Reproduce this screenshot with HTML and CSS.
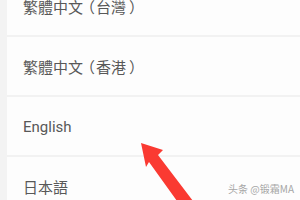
FILE: index.html
```html
<!DOCTYPE html>
<html>
<head>
<meta charset="utf-8">
<link rel="stylesheet" href="styles.css">
</head>
<body>
<div class="screen">
  <div class="strip"></div>
  <div class="list">
    <div class="row">繁體中文<span class="op">（</span>台灣<span class="cp">）</span></div>
    <div class="row">繁體中文<span class="op">（</span>香港<span class="cp">）</span></div>
    <div class="row">English</div>
    <div class="row">日本語</div>
  </div>
  <svg class="arrow" width="300" height="200" viewBox="0 0 300 200">
    <polygon points="141,143 163,150 158,155 193,201 177,201 149,162 146,167" fill="#fa3a32"/>
  </svg>
  <div class="mark">头条 @锻霜MA</div>
</div>
</body>
</html>
```
FILE: styles.css
```css
html, body {
  margin: 0;
  padding: 0;
  background: #fdfdfd;
}
.screen {
  position: relative;
  width: 300px;
  height: 200px;
  overflow: hidden;
  display: flex;
  font-family: Roboto, "Noto Sans CJK TC", sans-serif;
}
.strip {
  width: 7px;
  flex: none;
  background: #f3f3f3;
}
.list {
  flex: 1;
  display: flex;
  flex-direction: column;
  margin-top: -23px;
}
.row {
  box-sizing: border-box;
  height: 60px;
  flex: none;
  display: flex;
  align-items: center;
  padding-left: 16px;
  padding-top: 1px;
  border-bottom: 2px solid #f2f2f2;
  font-size: 15px;
  color: #585858;
  background: #fdfdfd;
}
.op {
  margin-left: -3px;
  margin-right: 1px;
}
.cp {
  margin-left: 3px;
}
.arrow {
  position: absolute;
  left: 0;
  top: 0;
}
.mark {
  position: absolute;
  right: 6px;
  bottom: 4px;
  font-size: 10px;
  color: #8a8a8a;
  opacity: 0.75;
  font-family: "Noto Sans CJK SC", sans-serif;
}
```
